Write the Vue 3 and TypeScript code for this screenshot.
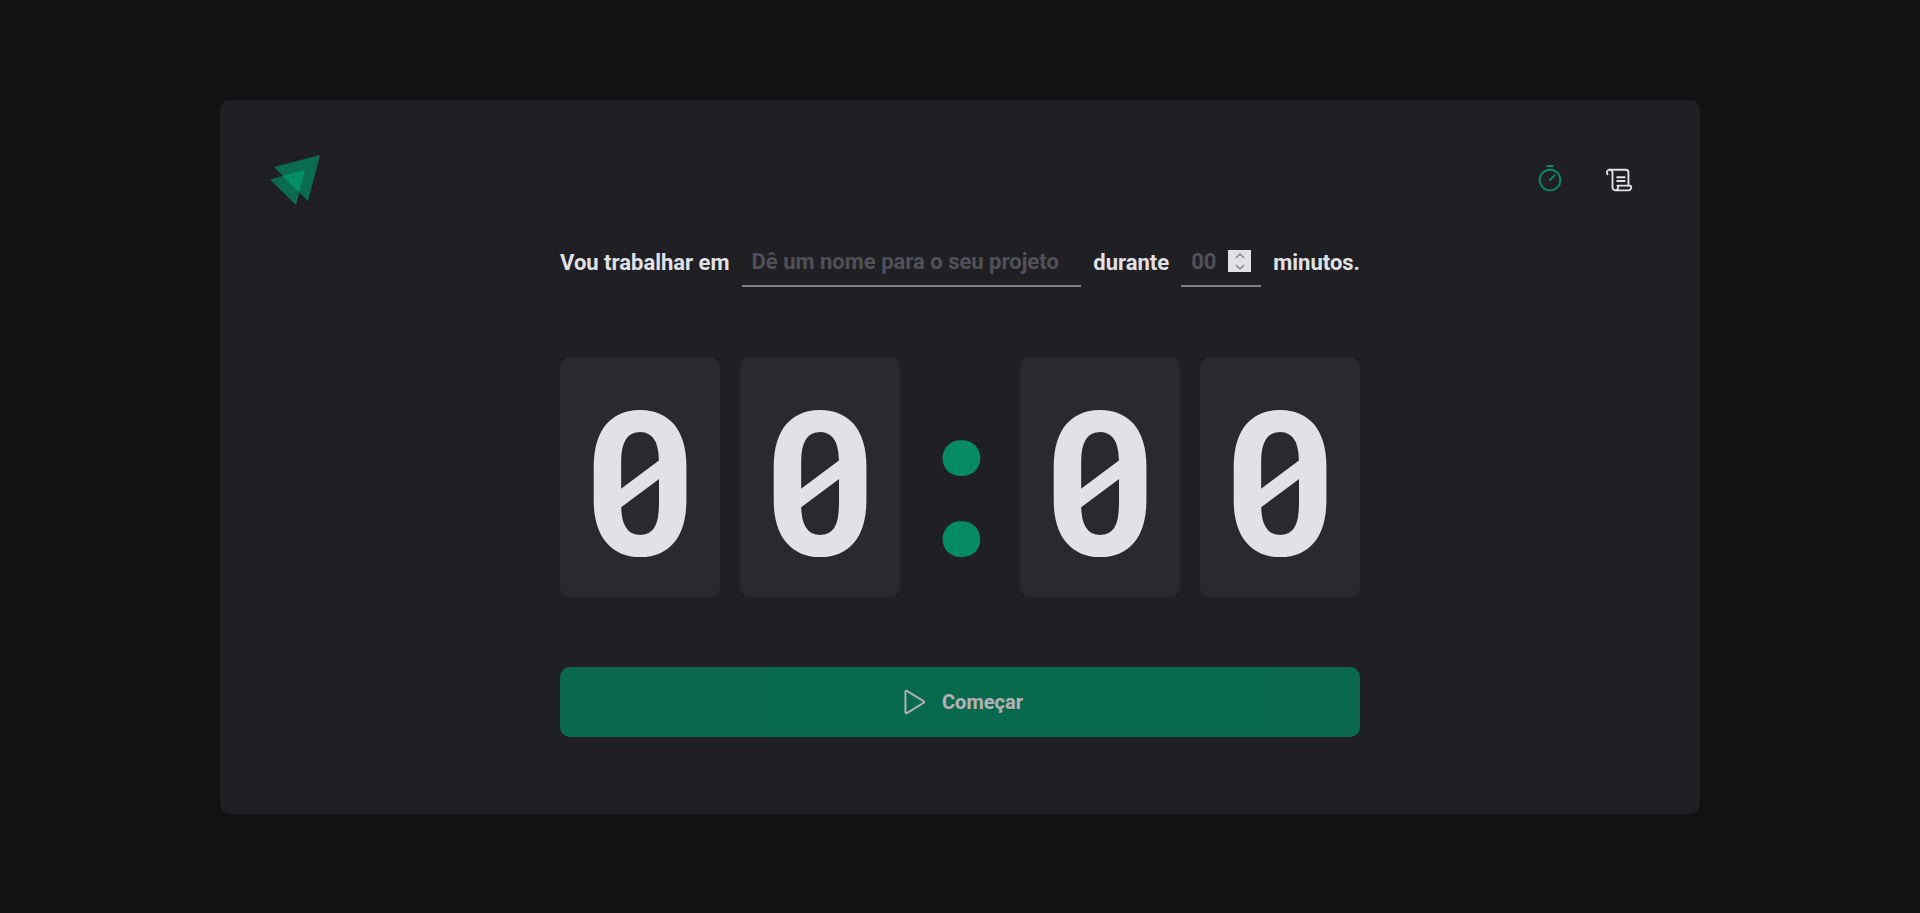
<script setup lang="ts">
import { computed, ref } from 'vue'

const task = ref('')
const minutes = ref<number | ''>('')

const digits = computed(() => String(minutes.value || 0).padStart(2, '0') + '00')

function step(amount: number) {
  minutes.value = Math.min(60, Math.max(0, Number(minutes.value) + amount))
}
</script>

<template>
  <div class="layout">
    <header class="header">
      <svg class="logo" viewBox="0 0 50 50" aria-hidden="true">
        <path class="wing" d="M4 12 50 0 38 46Z" />
        <path class="wing" d="M0 24.500 35 15 26 50Z" />
        <path d="M12.400 21.100 35 15 29.200 37.400Z" />
      </svg>
      <nav class="nav">
        <a class="link active" href="#timer" aria-label="Timer">
          <svg class="icon" viewBox="0 0 256 256">
            <circle cx="128" cy="128" r="88" />
            <path d="M128 128 167.600 88.400M104 8H152" />
          </svg>
        </a>
        <a class="link" href="#history" aria-label="Histórico">
          <svg class="icon" viewBox="0 0 256 256">
            <path d="M104 104H168M104 136H168M200 176V64a24 24 0 0 0-24-24H40" />
            <path d="M22.100 80A24 24 0 1 1 64 64V192a24 24 0 1 0 41.900-16h112A24 24 0 0 1 200 216H88" />
          </svg>
        </a>
      </nav>
    </header>

    <main class="main">
      <form class="timer" @submit.prevent>
        <div class="fields">
          <label for="task">Vou trabalhar em</label>
          <input id="task" v-model="task" class="field task" type="text" placeholder="Dê um nome para o seu projeto" />
          <label for="minutes">durante</label>
          <div class="field amount">
            <input id="minutes" v-model="minutes" class="minutes" type="number" min="0" max="60" placeholder="00" />
            <span class="stepper">
              <button class="step" type="button" aria-label="Mais" @click="step(5)">
                <svg viewBox="0 0 20 12"><path d="M2 10 10 2 18 10" /></svg>
              </button>
              <button class="step" type="button" aria-label="Menos" @click="step(-5)">
                <svg viewBox="0 0 20 12"><path d="M2 2 10 10 18 2" /></svg>
              </button>
            </span>
          </div>
          <span>minutos.</span>
        </div>

        <div class="countdown">
          <span class="digit">{{ digits[0] }}</span>
          <span class="digit">{{ digits[1] }}</span>
          <span class="separator">:</span>
          <span class="digit">{{ digits[2] }}</span>
          <span class="digit">{{ digits[3] }}</span>
        </div>

        <button class="start" type="submit" :disabled="!task">
          <svg class="icon" viewBox="0 0 256 256">
            <path d="M228.100 121.200 84.200 33.200A8 8 0 0 0 72 40V216a8 8 0 0 0 12.200 6.800l143.900-88A7.900 7.900 0 0 0 228.100 121.200Z" />
          </svg>
          Começar
        </button>
      </form>
    </main>
  </div>
</template>

<style>
body {
  background: #121214;
}
</style>

<style scoped>
* {
  box-sizing: border-box;
}
.layout {
  display: flex;
  flex-direction: column;
  max-width: 1480px;
  min-height: calc(100vh - 199px);
  margin: 100px auto 0;
  padding: 50px;
  border-radius: 10px;
  background: #202024;
  color: #e1e1e6;
  font-family: Roboto, sans-serif;
}
.header {
  display: flex;
  align-items: center;
  justify-content: space-between;
}
.logo {
  width: 50px;
  height: 50px;
  fill: #028f63;
}
.wing {
  fill: #0a6b4e;
}
.nav {
  display: flex;
  gap: 10px;
}
.link {
  display: flex;
  align-items: center;
  justify-content: center;
  width: 60px;
  height: 60px;
  color: #e1e1e6;
}
.active {
  color: #048b61;
}
.icon {
  width: 30px;
  height: 30px;
  overflow: visible;
  fill: none;
  stroke: currentColor;
  stroke-width: 16;
  stroke-linecap: round;
  stroke-linejoin: round;
}
.main {
  display: flex;
  flex: 1;
  align-items: center;
  justify-content: center;
}
.timer {
  display: flex;
  flex-direction: column;
  gap: 70px;
  width: 100%;
  max-width: 800px;
}
.fields {
  display: flex;
  align-items: center;
  gap: 12px;
  font-size: 22px;
  font-weight: 700;
  white-space: nowrap;
}
.field {
  height: 50px;
  padding: 0 10px;
  border: 0;
  border-bottom: 2px solid #7d7f83;
  background: transparent;
}
.task,
.minutes {
  min-width: 0;
  color: #e1e1e6;
  font: inherit;
  outline: 0;
}
.task {
  flex: 1;
}
.amount {
  display: flex;
  align-items: center;
  justify-content: space-between;
  width: 80px;
}
.minutes {
  width: 30px;
  padding: 0;
  border: 0;
  background: transparent;
  appearance: textfield;
}
.minutes::-webkit-inner-spin-button {
  display: none;
}
.task::placeholder,
.minutes::placeholder {
  color: #505059;
}
.stepper {
  display: flex;
  flex-direction: column;
  width: 23px;
  background: #e1e1e6;
}
.step {
  display: flex;
  align-items: center;
  justify-content: center;
  height: 11px;
  padding: 0;
  border: 0;
  background: transparent;
}
.step svg {
  width: 10px;
  height: 6px;
  fill: none;
  stroke: #858588;
  stroke-width: 3;
}
.countdown {
  display: flex;
  justify-content: space-between;
  font-family: 'Roboto Mono', 'DejaVu Sans Mono', monospace;
  font-size: 200px;
  font-weight: 700;
  line-height: 160px;
}
.digit {
  width: 160px;
  padding: 40px 20px;
  border-radius: 10px;
  background: #29292e;
}
.separator {
  display: flex;
  justify-content: center;
  width: 80px;
  padding: 40px 0;
  color: #048b61;
}
.start {
  display: flex;
  align-items: center;
  justify-content: center;
  gap: 15px;
  height: 70px;
  border: 0;
  border-radius: 10px;
  background: #00885f;
  color: #f6eff8;
  font: inherit;
  font-size: 20px;
  font-weight: 700;
}
.start:disabled {
  opacity: 0.7;
}
</style>
